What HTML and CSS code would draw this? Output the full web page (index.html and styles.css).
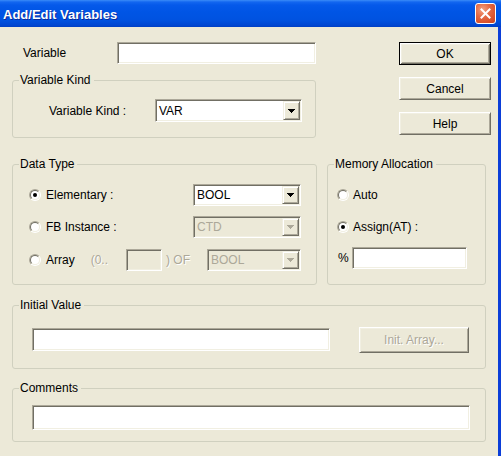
FILE: index.html
```html
<!DOCTYPE html>
<html>
<head>
<meta charset="utf-8">
<title>Add/Edit Variables</title>
<link rel="stylesheet" href="styles.css">
</head>
<body>
<div class="window">
  <div class="titlebar">
    <span class="title">Add/Edit Variables</span>
    <span class="close">
      <svg width="11" height="11" viewBox="0 0 11 11"><path d="M1.5 1.5 L9.5 9.5 M9.5 1.5 L1.5 9.5" stroke="#fff" stroke-width="2" stroke-linecap="square"/></svg>
    </span>
  </div>
  <div class="client">
    <div class="top">
      <div class="left-col">
        <div class="var-row">
          <span class="lbl var-lbl">Variable</span>
          <input class="edit var-edit" type="text">
        </div>
        <fieldset class="group kind-group">
          <legend>Variable Kind</legend>
          <div class="kind-row">
            <span class="lbl">Variable Kind :</span>
            <div class="combo kind-combo">
              <span class="combo-text">VAR</span>
              <span class="drop"><svg class="arrow" width="7" height="4" viewBox="0 0 7 4"><path d="M0 0h7v1H0zM1 1h5v1H1zM2 2h3v1H2zM3 3h1v1H3z"/></svg></span>
            </div>
          </div>
        </fieldset>
      </div>
      <div class="buttons">
        <button class="btn default">OK</button>
        <button class="btn">Cancel</button>
        <button class="btn">Help</button>
      </div>
    </div>

    <div class="mid">
      <fieldset class="group data-group">
        <legend>Data Type</legend>
        <div class="rows data-rows">
          <div class="row">
            <span class="radio checked"><span class="radio-in"></span></span>
            <span class="lbl rlbl">Elementary :</span>
            <div class="combo dt-combo">
              <span class="combo-text">BOOL</span>
              <span class="drop"><svg class="arrow" width="7" height="4" viewBox="0 0 7 4"><path d="M0 0h7v1H0zM1 1h5v1H1zM2 2h3v1H2zM3 3h1v1H3z"/></svg></span>
            </div>
          </div>
          <div class="row">
            <span class="radio"><span class="radio-in"></span></span>
            <span class="lbl rlbl">FB Instance :</span>
            <div class="combo dt-combo disabled">
              <span class="combo-text">CTD</span>
              <span class="drop"><svg class="arrow" width="7" height="4" viewBox="0 0 7 4"><path d="M0 0h7v1H0zM1 1h5v1H1zM2 2h3v1H2zM3 3h1v1H3z"/></svg></span>
            </div>
          </div>
          <div class="row row3">
            <span class="radio"><span class="radio-in"></span></span>
            <span class="lbl rlbl">Array</span>
            <span class="lbl dis range-lbl">(0..</span>
            <input class="edit size-edit" type="text" disabled>
            <span class="lbl dis of-lbl">) OF</span>
            <div class="combo arr-combo disabled">
              <span class="combo-text">BOOL</span>
              <span class="drop"><svg class="arrow" width="7" height="4" viewBox="0 0 7 4"><path d="M0 0h7v1H0zM1 1h5v1H1zM2 2h3v1H2zM3 3h1v1H3z"/></svg></span>
            </div>
          </div>
        </div>
      </fieldset>

      <fieldset class="group mem-group">
        <legend>Memory Allocation</legend>
        <div class="rows mem-rows">
          <div class="row">
            <span class="radio"><span class="radio-in"></span></span>
            <span class="lbl mlbl">Auto</span>
          </div>
          <div class="row">
            <span class="radio checked"><span class="radio-in"></span></span>
            <span class="lbl mlbl">Assign(AT) :</span>
          </div>
          <div class="row pct-row">
            <span class="lbl pct">%</span>
            <input class="edit pct-edit" type="text">
          </div>
        </div>
      </fieldset>
    </div>

    <fieldset class="group init-group">
      <legend>Initial Value</legend>
      <div class="init-row">
        <input class="edit init-edit" type="text">
        <button class="btn init-btn" disabled>Init. Array...</button>
      </div>
    </fieldset>

    <fieldset class="group comm-group">
      <legend>Comments</legend>
      <div class="comm-row">
        <input class="edit comm-edit" type="text">
      </div>
    </fieldset>
  </div>
</div>
</body>
</html>
```

FILE: styles.css
```css
* {
  box-sizing: border-box;
}

html, body {
  margin: 0;
  padding: 0;
}

body {
  width: 501px;
  height: 456px;
  overflow: hidden;
  background: #ECE9D8;
  font-family: "Liberation Sans", Arial, sans-serif;
  font-size: 12px;
  color: #000;
}

.window {
  width: 501px;
  height: 456px;
  display: flex;
  flex-direction: column;
}

/* ---------- title bar ---------- */
.titlebar {
  flex: none;
  height: 27px;
  display: flex;
  align-items: center;
  padding: 0 5px 0 3px;
  background: linear-gradient(to bottom,
    #3a8cf8 0px, #1367f0 2px, #0559ea 5px, #0055e5 12px,
    #0052e0 20px, #0047d2 25px, #003fc4 27px);
}

.title {
  color: #fff;
  font-weight: bold;
  font-size: 13px;
  line-height: 16px;
  margin-top: 2px;
  text-shadow: 1px 1px 0 #0b2a98;
}

.close {
  margin-left: auto;
  width: 21px;
  height: 21px;
  border: 1px solid #fff;
  border-radius: 3px;
  background: radial-gradient(circle at 35% 30%, #f2a283 0%, #e46a44 40%, #d9502a 75%, #c4421f 100%);
  display: flex;
  align-items: center;
  justify-content: center;
}

.close svg {
  display: block;
}

/* ---------- client area ---------- */
.client {
  flex: 1;
  background: #ECE9D8;
  border-right: 3px solid #0b3ed8;
  padding: 15px 0 0 12px;
}

.lbl {
  white-space: nowrap;
  line-height: 14px;
}

.dis {
  color: #ACA899;
  text-shadow: 1px 1px 0 #fff;
}

/* sunken edit */
.edit {
  display: block;
  margin: 0;
  padding: 0 2px;
  font: inherit;
  background: #fff;
  border: 1px solid;
  border-color: #ACA899 #fff #fff #ACA899;
  box-shadow: inset 1px 1px 0 #716F64, inset -1px -1px 0 #F1EFE2;
  outline: none;
  border-radius: 0;
}

.edit:disabled {
  background: #ECE9D8;
}

/* raised button */
.btn {
  display: block;
  margin: 0;
  padding: 0;
  font: inherit;
  color: #000;
  background: #ECE9D8;
  border: 1px solid;
  border-color: #fff #716F64 #716F64 #fff;
  box-shadow: inset 1px 1px 0 #F1EFE2, inset -1px -1px 0 #ACA899;
  border-radius: 0;
}

.btn.default {
  border-color: #000;
  box-shadow: inset 1px 1px 0 #fff, inset -1px -1px 0 #716F64,
              inset 2px 2px 0 #F1EFE2, inset -2px -2px 0 #ACA899;
}

.btn:disabled {
  color: #ACA899;
  text-shadow: 1px 1px 0 #fff;
}

/* combo */
.combo {
  display: flex;
  align-items: stretch;
  background: #fff;
  border: 1px solid;
  border-color: #ACA899 #fff #fff #ACA899;
  box-shadow: inset 1px 1px 0 #716F64, inset -1px -1px 0 #F1EFE2;
  padding: 1px;
}

.combo-text {
  flex: 1;
  display: flex;
  align-items: center;
  padding-left: 2px;
  line-height: 14px;
}

.drop {
  flex: none;
  width: 17px;
  display: flex;
  align-items: center;
  justify-content: center;
  background: #ECE9D8;
  border: 1px solid;
  border-color: #F1EFE2 #716F64 #716F64 #F1EFE2;
  box-shadow: inset 1px 1px 0 #fff, inset -1px -1px 0 #ACA899;
}

.arrow {
  display: block;
  fill: #000;
}

.combo.disabled {
  background: #ECE9D8;
}

.combo.disabled .combo-text {
  color: #ACA899;
}

.combo.disabled .arrow {
  fill: #ACA899;
}

/* radio */
.radio {
  flex: none;
  width: 12px;
  height: 12px;
  border-radius: 50%;
  border: 1px solid;
  border-color: #ACA899 #fff #fff #ACA899;
  display: flex;
}

.radio-in {
  flex: 1;
  border-radius: 50%;
  border: 1px solid;
  border-color: #716F64 #F1EFE2 #F1EFE2 #716F64;
  background: #fff;
  display: flex;
  align-items: center;
  justify-content: center;
}

.radio.checked .radio-in::after {
  content: "";
  width: 4px;
  height: 4px;
  border-radius: 50%;
  background: #000;
}

/* group box */
.group {
  margin: 0;
  padding: 0;
  min-width: 0;
  border: 1px solid #D0D0BF;
  border-radius: 3px;
}

.group legend {
  margin-left: 6px;
  padding: 0 3px 0 1px;
  line-height: 14px;
  font-size: 12px;
}

/* ---------- top section ---------- */
.top {
  display: flex;
  align-items: flex-start;
}

.left-col {
  width: 304px;
  flex: none;
}

.var-row {
  display: flex;
  align-items: center;
  height: 22px;
}

.var-lbl {
  margin-left: 11px;
}

.var-edit {
  margin-left: auto;
  width: 199px;
  height: 22px;
}

.kind-group {
  margin-top: 9px;
  width: 304px;
}

.kind-row {
  display: flex;
  align-items: center;
  padding: 12px 0 15px 36px;
}

.kind-combo {
  margin-left: auto;
  margin-right: 13px;
  width: 147px;
  height: 23px;
}

.buttons {
  margin-left: 83px;
  display: flex;
  flex-direction: column;
  gap: 12px;
  padding-top: 0;
}

.buttons .btn {
  width: 92px;
  height: 23px;
}

/* ---------- middle section ---------- */
.mid {
  display: flex;
  margin-top: 19px;
}

.data-group {
  width: 305px;
}

.mem-group {
  width: 159px;
  margin-left: 10px;
}

.rows {
  display: flex;
  flex-direction: column;
}

.row {
  display: flex;
  align-items: center;
  height: 22px;
}

.data-rows {
  padding: 13px 15px 13px 16px;
  gap: 10px;
}

.data-rows .row3 {
  margin-top: 1px;
}

.rlbl {
  margin-left: 5px;
}

.dt-combo {
  margin-left: auto;
  width: 108px;
  height: 22px;
}

.range-lbl {
  margin-left: 16px;
}

.size-edit {
  margin-left: 18px;
  width: 36px;
  height: 22px;
}

.of-lbl {
  margin-left: 4px;
}

.arr-combo {
  margin-left: auto;
  width: 94px;
  height: 22px;
}

.mem-rows {
  padding: 13px 0 13px 9px;
  gap: 10px;
}

.mlbl {
  margin-left: 4px;
}

.pct-row {
  margin-top: -1px;
}

.pct {
  margin-left: 1px;
}

.pct-edit {
  margin-left: 3px;
  width: 115px;
  height: 22px;
}

/* ---------- initial value ---------- */
.init-group {
  margin-top: 13px;
  width: 474px;
}

.init-row {
  display: flex;
  align-items: center;
  height: 25px;
  margin: 15px 0 16px 19px;
}

.init-edit {
  width: 298px;
  height: 23px;
}

.init-btn {
  margin-left: 29px;
  width: 110px;
  height: 26px;
}

/* ---------- comments ---------- */
.comm-group {
  margin-top: 12px;
  width: 474px;
}

.comm-row {
  padding: 10px 0 11px 19px;
}

.comm-edit {
  width: 438px;
  height: 25px;
}
```
